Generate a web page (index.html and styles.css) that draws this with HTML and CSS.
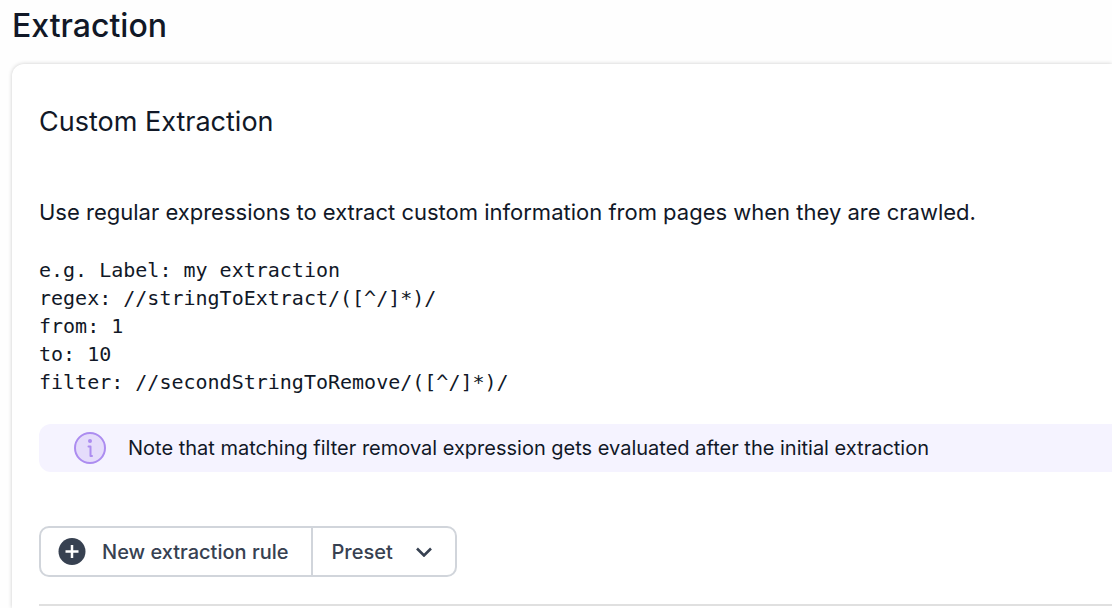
FILE: index.html
```html
<!DOCTYPE html>
<html lang="en">
<head>
    <meta charset="UTF-8">
    <meta name="viewport" content="width=device-width, initial-scale=1.0">
    <title>Extraction</title>

    <link rel="stylesheet" href="styles.css">
</head>
<body>

    <h1>Extraction</h1>
    <main class="card">
        <h2>Custom Extraction</h2>
        <p class="intro">Use regular expressions to extract custom information from pages when they are crawled.</p>
        <pre class="example">e.g. Label: my extraction
regex: //stringToExtract/([^/]*)/
from: 1
to: 10
filter: //secondStringToRemove/([^/]*)/</pre>

        <div class="note">
            <svg class="note-icon" viewBox="0 0 32 32" aria-hidden="true">
                <circle cx="16" cy="16" r="15" fill="#e5dcfb" stroke="#ac8cf0" stroke-width="2"/>
                <circle cx="16" cy="9" r="2" fill="#ac8cf0"/>
                <path d="M14.500 14.500H16.500V24H18" fill="none" stroke="#ac8cf0" stroke-width="2" stroke-linecap="round" stroke-linejoin="round"/>
            </svg>
            <p>Note that matching filter removal expression gets evaluated after the initial extraction</p>
        </div>

        <div class="btn-group">
            <button class="btn" type="button">
                <svg class="plus-icon" viewBox="0 0 28 28" aria-hidden="true">
                    <circle cx="14" cy="13.500" r="13.500" fill="#374151"/>
                    <path d="M14 7v13M7.500 13.500h13" stroke="#fff" stroke-width="2.500"/>
                </svg>
                New extraction rule
            </button>
            <div class="preset">
                <select class="preset-select" aria-label="Preset">
                    <option>Preset</option>
                </select>
                <svg class="chevron" viewBox="0 0 16 10" aria-hidden="true">
                    <path d="M1 1.500L8 8.500l7-7" fill="none" stroke="#374151" stroke-width="2.600"/>
                </svg>
            </div>
        </div>

        <hr>
    </main>

</body>
</html>
```

FILE: styles.css
```css
body {
    display: flex;
    flex-direction: column;
    box-sizing: border-box;
    min-height: 100vh;
    margin: 0;
    padding: 8px 0 0 12px;
    font-family: Inter, sans-serif;
    background-color: #fefefe;
    color: #111827;
}
h1 {
    margin: 0 0 20px;
    font-size: 32px;
    line-height: 36px;
    font-weight: 500;
}
.card {
    flex: 1;
    background-color: white;
    padding: 40px 0 0 27px;
    border-radius: 12px 0 0 0;
    box-shadow: 0 0 4px rgba(0, 0, 0, 0.2);
}
h2 {
    margin: 0 0 56px;
    font-size: 27px;
    line-height: 36px;
    font-weight: 400;
}
.intro {
    margin: 0 0 28px;
    font-size: 22px;
    line-height: 32px;
}
.example {
    margin: 0 0 28px;
    font-family: "DejaVu Sans Mono", monospace;
    font-size: 20px;
    line-height: 28px;
}
.note {
    display: flex;
    align-items: center;
    gap: 22px;
    height: 48px;
    margin-bottom: 54px;
    padding-left: 35px;
    border-radius: 12px 0 0 12px;
    background-color: #f5f3ff;
    font-size: 20px;
}
.note p {
    margin: 0;
}
.note-icon {
    width: 32px;
    height: 32px;
}
.btn-group {
    display: flex;
    width: fit-content;
    height: 47px;
    margin-bottom: 27px;
    border: 2px solid #d1d5db;
    border-radius: 10px;
}
.btn,
.preset-select {
    border: none;
    background: none;
    color: #374151;
    font-family: inherit;
    font-size: 20px;
    font-weight: 500;
    cursor: pointer;
}
.btn {
    display: flex;
    align-items: center;
    gap: 16px;
    padding: 0 23px 0 17px;
}
.plus-icon {
    width: 28px;
    height: 28px;
}
.preset {
    display: grid;
    align-items: center;
    border-left: 2px solid #d1d5db;
}
.preset-select,
.chevron {
    grid-area: 1 / 1;
}
.preset-select {
    appearance: none;
    height: 100%;
    padding: 0 62px 0 18px;
}
.chevron {
    justify-self: end;
    width: 16px;
    height: 10px;
    margin-right: 23px;
    pointer-events: none;
}
hr {
    margin: 0;
    border: none;
    border-top: 2px solid #e0e0e0;
}
```
